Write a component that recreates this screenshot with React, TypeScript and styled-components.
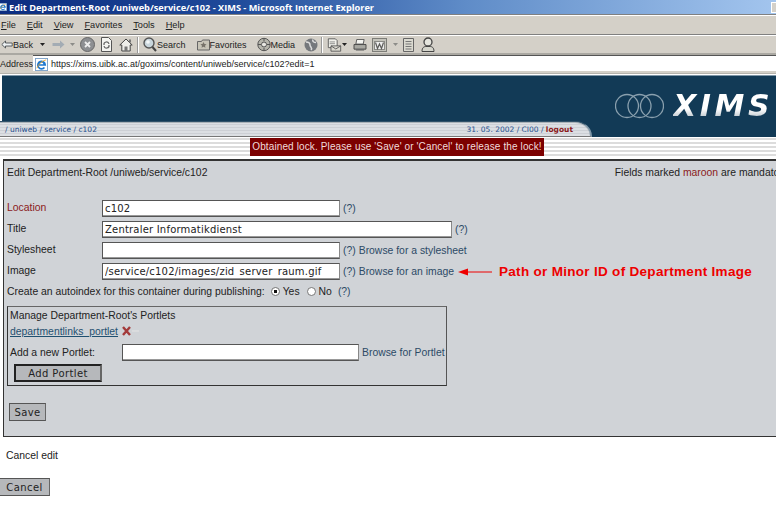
import React from 'react';
import styled, {createGlobalStyle} from 'styled-components';

const GlobalStyle = createGlobalStyle`
  html, body {
    margin: 0;
    padding: 0;
    width: 776px;
    height: 509px;
    overflow: hidden;
    background: #fff;
    font-family: 'Liberation Sans', Arial, sans-serif;
  }
`;

const Page = styled.div`
  width: 776px;
  height: 509px;
  overflow: hidden;
`;

const TitleBar = styled.div`
  height: 14px;
  display: flex;
  align-items: center;
  justify-content: space-between;
  background: linear-gradient(90deg, #0c2d80 0%, #1f4a9a 30%, #5f8cc8 60%, #a3c5ee 100%);
  border-bottom: 1px solid #808080;
`;

const TitleText = styled.span`
  display: flex;
  align-items: center;
  gap: 2px;
  margin-left: -1px;
  color: #fff;
  font: bold 9.2px 'Open Sans', sans-serif;
  white-space: nowrap;
`;

const WinButton = styled.span`
  width: 5px;
  height: 11px;
  background: #d4d0c8;
  border: 1px solid #fff;
  border-right: 0;
  box-sizing: border-box;
`;

const MenuBar = styled.div`
  height: 18px;
  display: flex;
  align-items: center;
  gap: 11px;
  padding-left: 1px;
  background: #d4d0c8;
  border-top: 1px solid #fff;
  border-bottom: 1px solid #808080;
  font: 9.2px 'Liberation Sans', sans-serif;
  color: #222;
`;

const MenuItem = styled.span`
  &::first-letter {
    text-decoration: underline;
  }
`;

const ToolBar = styled.div`
  height: 17px;
  display: flex;
  align-items: center;
  background: #d4d0c8;
  border-top: 1px solid #fff;
  font: 9px 'Liberation Sans', sans-serif;
  color: #222;
`;

const Tool = styled.span<{$left: number}>`
  display: inline-flex;
  align-items: center;
  margin-left: ${(p) => p.$left}px;
`;

const ToolSep = styled.span<{$left: number}>`
  width: 1px;
  height: 16px;
  background: #999;
  border-right: 1px solid #fff;
  margin-left: ${(p) => p.$left}px;
`;

const AddressBar = styled.div`
  height: 16px;
  display: flex;
  align-items: stretch;
  background: #d4d0c8;
  border-top: 2px solid #aaa8a2;
  font: 9px 'Liberation Sans', sans-serif;
  color: #222;
`;

const AddressLabel = styled.span`
  width: 33px;
  flex: none;
  line-height: 18px;
`;

const AddressField = styled.div`
  flex: 1;
  display: flex;
  align-items: center;
  gap: 3px;
  padding: 1px 0 0 2px;
  background: #fff;
  border-top: 1px solid #555;
  color: #222;
`;

const AddressEnd = styled.div`
  height: 2px;
  background: #d4d0c8;
  border-bottom: 1px solid #b5b3ad;
`;

const Header = styled.header`
  margin: 1px 0 0 2px;
  height: 61px;
  display: flex;
  flex-direction: column;
  background: #123a56;
  border-top: 1px solid #7f97a8;
`;

const LogoRow = styled.div`
  height: 45px;
  flex: none;
  display: flex;
  align-items: center;
  justify-content: flex-end;
  gap: 9px;
  padding: 14px 3px 0 0;
  box-sizing: border-box;
`;

const LogoText = styled.span`
  font: italic bold 30px 'DejaVu Sans', sans-serif;
  letter-spacing: 3.5px;
  line-height: 30px;
  background: linear-gradient(180deg, #fff 60%, #a4b0ba 100%);
  -webkit-background-clip: text;
  background-clip: text;
  color: transparent;
`;

const CrumbBar = styled.div`
  margin-left: -2px;
  width: 592px;
  height: 16px;
  flex: none;
  display: flex;
  align-items: center;
  justify-content: space-between;
  padding: 0 17px 0 5px;
  box-sizing: border-box;
  background: repeating-linear-gradient(180deg, #dcdfe3 0 2px, #cdd0d5 2px 3px);
  border-top: 1px solid #31526a;
  border-right: 2px solid #7f97a8;
  border-bottom: 1px solid #777;
  border-top-right-radius: 17px 15px;
  box-shadow: inset 0 1px 0 #aab2b8;
  font: 7.5px 'DejaVu Sans', sans-serif;
  color: #1f4f8f;
`;

const LogoutLink = styled.b`
  color: #8b1a1a;
`;

const LockStrip = styled.div`
  height: 18px;
  margin-top: 1px;
  display: flex;
  justify-content: center;
  background: repeating-linear-gradient(180deg, #dcdcdc 0 2px, #fff 2px 4px);
  border-bottom: 2px solid #fff;
`;

const LockMessage = styled.span`
  width: 294px;
  margin-left: 18px;
  background: #7c0000;
  color: #f0dcdc;
  font: 10px/18px 'Liberation Sans', sans-serif;
  letter-spacing: 0.12px;
  text-align: center;
  white-space: nowrap;
`;

const Panel = styled.section`
  margin: 1px 0 0 3px;
  width: 800px;
  height: 278px;
  box-sizing: border-box;
  padding: 6px 3px 0 3px;
  background: #d0d3d7;
  border: 1px solid #333;
  border-top-width: 2px;
  font: 10.4px 'Liberation Sans', sans-serif;
  color: #222;
`;

const PanelHead = styled.div`
  display: flex;
  justify-content: space-between;
  height: 31px;
  white-space: nowrap;
`;

const MandatoryNote = styled.span`
  margin-right: 11px;
`;

const Maroon = styled.span`
  color: #8b1a1a;
`;

const Row = styled.div`
  height: 21px;
  display: flex;
  align-items: center;
  white-space: nowrap;
`;

const Label = styled.span<{$required?: boolean}>`
  width: 95px;
  flex: none;
  margin-top: -3px;
  color: ${(p) => (p.$required ? '#8b1a1a' : '#222')};
`;

const TextInput = styled.input<{$width: number}>`
  width: ${(p) => p.$width}px;
  height: 17px;
  box-sizing: border-box;
  padding: 0 2px;
  flex: none;
  background: #fff;
  border: 1px solid #555;
  border-right-color: #888;
  box-shadow: inset 0 -1px 0 #999;
  font: 10px 'DejaVu Sans', sans-serif;
  letter-spacing: 0.2px;
  color: #222;
  outline: none;
`;

const Help = styled.span`
  margin-left: 3px;
  color: #2c4a66;
`;

const Browse = styled.a`
  margin-left: 3px;
  color: #2c4a66;
`;

const Callout = styled.span`
  display: inline-flex;
  align-items: center;
  margin-left: 4px;
  gap: 7px;
  color: #ee0000;
  font: bold 13.5px 'Liberation Sans', sans-serif;
  letter-spacing: 0.3px;
`;

const AutoindexRow = styled(Row)`
  margin-top: -1px;
  gap: 3px;
`;

const Radio = styled.span<{$checked?: boolean}>`
  width: 9px;
  height: 9px;
  box-sizing: border-box;
  margin-left: ${(p) => (p.$checked ? 3 : 4)}px;
  border-radius: 50%;
  background: ${(p) =>
    p.$checked ? 'radial-gradient(circle, #111 0 1.5px, #fff 2px)' : '#fff'};
  border: 1px solid #777;
`;

const PortletBox = styled.div`
  margin-top: 4px;
  width: 440px;
  height: 80px;
  box-sizing: border-box;
  padding: 0 2px;
  border: 1px solid #333;
  border-top-color: #666;
  border-right-color: #555;
`;

const PortletLine = styled.div`
  height: 16px;
  display: flex;
  align-items: center;
  white-space: nowrap;
`;

const PortletLink = styled.a`
  color: #1f5070;
  text-decoration: underline;
`;

const DeleteSlot = styled.span`
  display: inline-flex;
  margin-left: 4px;
`;

const AddLine = styled(PortletLine)`
  height: 20px;
  margin-top: 3px;
`;

const AddLabel = styled.span`
  width: 112px;
  flex: none;
`;

const Button = styled.button<{$strong?: boolean; $width: number}>`
  display: block;
  width: ${(p) => p.$width}px;
  height: 18px;
  padding: 0;
  background: #b6b8bb;
  border: ${(p) => (p.$strong ? '2px solid #222' : '1px solid #555')};
  border-right-color: #666;
  font: 10px 'DejaVu Sans', sans-serif;
  letter-spacing: 0.4px;
  color: #222;
`;

const AddButton = styled(Button)`
  margin: 2px 0 0 4px;
`;

const SaveButton = styled(Button)`
  margin: 17px 0 0 2px;
`;

const CancelNote = styled.p`
  margin: 12px 0 0 6px;
  font: 10.4px/14px 'Liberation Sans', sans-serif;
  color: #222;
`;

const CancelButton = styled(Button)`
  margin: 15px 0 0 -1px;
`;

const Caret = ({color = '#222'}: {color?: string}) => (
  <svg width="5" height="3" viewBox="0 0 5 3">
    <path d="M0 0h5L2.500 3z" fill={color} />
  </svg>
);

const BackIcon = () => (
  <svg width="12" height="9" viewBox="0 0 12 9">
    <path d="M.8 4.500 4.500 1v2h6.700v3H4.500v2z" fill="#eef2f4" stroke="#4a4f52" strokeWidth="0.9" />
  </svg>
);

const ForwardIcon = () => (
  <svg width="13" height="9" viewBox="0 0 13 9">
    <path d="M12.500 4.500 8 .5v2.500H.5v3H8v2.500z" fill="#a3acb4" />
  </svg>
);

const StopIcon = () => (
  <svg width="15" height="15" viewBox="0 0 15 15">
    <circle cx="7.500" cy="7.500" r="7" fill="#8d8f92" stroke="#666" />
    <path d="M5 5l5 5M10 5l-5 5" stroke="#eee" strokeWidth="1.800" />
  </svg>
);

const RefreshIcon = () => (
  <svg width="13" height="15" viewBox="0 0 13 15">
    <path d="M1.500.5h7l3 3v11h-10z" fill="#f4f4f0" stroke="#555" />
    <path d="M4 8a2.500 2.500 0 0 1 5-1M9 8a2.500 2.500 0 0 1-5 1" fill="none" stroke="#666" strokeWidth="1.200" />
  </svg>
);

const HomeIcon = () => (
  <svg width="14" height="14" viewBox="0 0 14 14">
    <path d="M7 1 .8 7h2v6h8.400V7h2z" fill="#eeeeea" stroke="#444" />
    <rect x="5.500" y="8.500" width="3" height="4.500" fill="#777" />
    <rect x="10" y="1.500" width="2" height="3" fill="#777" />
  </svg>
);

const SearchIcon = () => (
  <svg width="14" height="15" viewBox="0 0 14 15">
    <circle cx="6" cy="6" r="5" fill="#c9d6dc" stroke="#555" strokeWidth="1.400" />
    <circle cx="5" cy="5" r="1.800" fill="#f4f7f8" />
    <path d="m9.500 10 3.500 4" stroke="#444" strokeWidth="2" />
  </svg>
);

const FavoritesIcon = () => (
  <svg width="13" height="13" viewBox="0 0 13 13">
    <path d="M.5 3.500h4l1-1.500h7v10h-12z" fill="#c8c5b8" stroke="#666" />
    <path d="m6.500 4 1 2 2 .2-1.500 1.500.5 2-2-1-2 1 .5-2L3.500 6.200l2-.2z" fill="#77736a" />
  </svg>
);

const MediaIcon = () => (
  <svg width="14" height="15" viewBox="0 0 14 15">
    <circle cx="7" cy="7.500" r="6.200" fill="#b5b5ac" stroke="#555" />
    <circle cx="7" cy="7.500" r="2.500" fill="#e8e8e2" stroke="#555" />
    <path d="M7 1v3M7 11v3M1 7.500h3M10 7.500h3" stroke="#555" />
  </svg>
);

const HistoryIcon = () => (
  <svg width="14" height="14" viewBox="0 0 14 14">
    <circle cx="7" cy="7" r="6.500" fill="#75787c" />
    <path d="M2 4c2 0 4 1 4 3s3 3 1 5M9 1.500c-1 2 1 3 3 3" stroke="#ddd" strokeWidth="1.500" fill="none" />
  </svg>
);

const MailIcon = () => (
  <svg width="15" height="14" viewBox="0 0 17 15">
    <path d="M1.500.5h8l2 2v8h-10z" fill="#f0f0ea" stroke="#555" />
    <path d="M3 4h6M3 6h6" stroke="#888" />
    <path d="M4.500 8.500h11v6h-11z" fill="#dad8cf" stroke="#555" />
    <path d="m4.500 8.500 5.500 3.500 5.500-3.500" fill="none" stroke="#555" />
  </svg>
);

const PrintIcon = () => (
  <svg width="14" height="12" viewBox="0 0 15 13">
    <path d="M4 .5h8l-1 5H3z" fill="#f4f4f0" stroke="#555" />
    <path d="M1 6h13v5H1z" fill="#a8a8a2" stroke="#444" />
    <path d="M3 11h9v1.500H3z" fill="#666" />
  </svg>
);

const WordIcon = () => (
  <svg width="15" height="14" viewBox="0 0 15 14">
    <rect x="0.500" y="0.500" width="14" height="13" fill="#c4c3bb" stroke="#7d7d78" />
    <rect x="2.500" y="3.500" width="10" height="8" fill="#eee" stroke="#8a8a85" />
    <path d="m3.500 4.500 2 6 2-4.500 2 4.500 2-6" fill="none" stroke="#5d5d5a" strokeWidth="1.200" />
  </svg>
);

const DiscussIcon = () => (
  <svg width="13" height="14" viewBox="0 0 13 14">
    <path d="M1.500.5h10v13h-10z" fill="#dad9d0" stroke="#666" />
    <path d="M3.500 3.500h6M3.500 6h6M3.500 8.500h6M3.500 11h6" stroke="#777" />
  </svg>
);

const MessengerIcon = () => (
  <svg width="14" height="15" viewBox="0 0 14 15">
    <circle cx="7" cy="5" r="4" fill="#e5e5de" stroke="#444" strokeWidth="1.300" />
    <path d="M1 14.500c0-4 2-5 4-5h4c2 0 4 1 4 5z" fill="#d5d5cc" stroke="#444" />
  </svg>
);

const IeIcon = ({size}: {size: number}) => (
  <svg width={size} height={size} viewBox="0 0 14 14">
    <rect x="0.500" y="0.500" width="13" height="13" fill="#fff" stroke="#7aa0c8" />
    <path d="M3 7.500h8a4 4 0 1 0-.8 2.600M4 7a3 3 0 0 1 6 0" fill="none" stroke="#1e78d0" strokeWidth="1.800" />
    <path d="M2 11c2-5 6-8 10-9" fill="none" stroke="#e8a020" strokeWidth="0.900" />
  </svg>
);

const Rings = () => (
  <svg width="49" height="26" viewBox="0 0 49 26">
    <g fill="none" stroke="#8aa0ae" strokeWidth="1.300">
      <circle cx="12" cy="13" r="11.500" />
      <circle cx="24.500" cy="13" r="11.500" />
      <circle cx="37" cy="13" r="11.500" />
    </g>
  </svg>
);

const DeleteMark = () => (
  <svg width="19" height="10" viewBox="0 0 19 10">
    <path d="M1 1l7 8M8 1 1 9" stroke="#a33a3a" strokeWidth="2.400" />
    <path d="M10 5h7" stroke="#e4e4e4" />
  </svg>
);

const RedArrow = () => (
  <svg width="34" height="8" viewBox="0 0 34 8">
    <path d="M9 4h25" stroke="#ee0000" />
    <path d="M0 4l10-3.500v7z" fill="#ee0000" />
  </svg>
);

const App: React.FC = () => (
  <Page>
    <GlobalStyle />
    <TitleBar>
      <TitleText>
        <IeIcon size={8} />
        Edit Department-Root /uniweb/service/c102 - XIMS - Microsoft Internet Explorer
      </TitleText>
      <WinButton />
    </TitleBar>
    <MenuBar>
      <MenuItem>File</MenuItem>
      <MenuItem>Edit</MenuItem>
      <MenuItem>View</MenuItem>
      <MenuItem>Favorites</MenuItem>
      <MenuItem>Tools</MenuItem>
      <MenuItem>Help</MenuItem>
    </MenuBar>
    <ToolBar>
      <Tool $left={1}>
        <BackIcon />
        Back
      </Tool>
      <Tool $left={7}><Caret /></Tool>
      <Tool $left={7}><ForwardIcon /></Tool>
      <Tool $left={5}><Caret color="#8c8c88" /></Tool>
      <Tool $left={5}><StopIcon /></Tool>
      <Tool $left={5}><RefreshIcon /></Tool>
      <Tool $left={6}><HomeIcon /></Tool>
      <ToolSep $left={4} />
      <Tool $left={4}>
        <SearchIcon />
        Search
      </Tool>
      <Tool $left={11}>
        <FavoritesIcon />
        Favorites
      </Tool>
      <Tool $left={10}>
        <MediaIcon />
        Media
      </Tool>
      <Tool $left={9}><HistoryIcon /></Tool>
      <ToolSep $left={3} />
      <Tool $left={4}>
        <MailIcon />
        <Caret />
      </Tool>
      <Tool $left={6}><PrintIcon /></Tool>
      <Tool $left={5}><WordIcon /></Tool>
      <Tool $left={6}><Caret color="#8c8c88" /></Tool>
      <Tool $left={4}><DiscussIcon /></Tool>
      <Tool $left={6}><MessengerIcon /></Tool>
    </ToolBar>
    <AddressBar>
      <AddressLabel>Address</AddressLabel>
      <AddressField>
        <IeIcon size={13} />
        https://xims.uibk.ac.at/goxims/content/uniweb/service/c102?edit=1
      </AddressField>
    </AddressBar>
    <AddressEnd />
    <Header>
      <LogoRow>
        <Rings />
        <LogoText>XIMS</LogoText>
      </LogoRow>
      <CrumbBar>
        <span>/ uniweb / service / c102</span>
        <span>
          31. 05. 2002 / CI00 / <LogoutLink>logout</LogoutLink>
        </span>
      </CrumbBar>
    </Header>
    <LockStrip>
      <LockMessage>
        Obtained lock. Please use 'Save' or 'Cancel' to release the lock!
      </LockMessage>
    </LockStrip>
    <Panel>
      <PanelHead>
        <span>Edit Department-Root /uniweb/service/c102</span>
        <MandatoryNote>
          Fields marked <Maroon>maroon</Maroon> are mandatory
        </MandatoryNote>
      </PanelHead>
      <Row>
        <Label $required>Location</Label>
        <TextInput $width={238} readOnly value="c102" />
        <Help>(?)</Help>
      </Row>
      <Row>
        <Label>Title</Label>
        <TextInput $width={350} readOnly value="Zentraler Informatikdienst" />
        <Help>(?)</Help>
      </Row>
      <Row>
        <Label>Stylesheet</Label>
        <TextInput $width={238} readOnly value="" />
        <Help>(?)</Help>
        <Browse>Browse for a stylesheet</Browse>
      </Row>
      <Row>
        <Label>Image</Label>
        <TextInput $width={238} readOnly value="/service/c102/images/zid_server_raum.gif" />
        <Help>(?)</Help>
        <Browse>Browse for an image</Browse>
        <Callout>
          <RedArrow />
          Path or Minor ID of Department Image
        </Callout>
      </Row>
      <AutoindexRow>
        Create an autoindex for this container during publishing:
        <Radio $checked />
        Yes
        <Radio />
        No
        <Help>(?)</Help>
      </AutoindexRow>
      <PortletBox>
        <PortletLine>Manage Department-Root's Portlets</PortletLine>
        <PortletLine>
          <PortletLink>departmentlinks_portlet</PortletLink>
          <DeleteSlot><DeleteMark /></DeleteSlot>
        </PortletLine>
        <AddLine>
          <AddLabel>Add a new Portlet:</AddLabel>
          <TextInput $width={237} readOnly value="" />
          <Browse>Browse for Portlet</Browse>
        </AddLine>
        <AddButton $strong $width={88}>Add Portlet</AddButton>
      </PortletBox>
      <SaveButton $width={37}>Save</SaveButton>
    </Panel>
    <CancelNote>Cancel edit</CancelNote>
    <CancelButton $width={51}>Cancel</CancelButton>
  </Page>
);

export default App;
